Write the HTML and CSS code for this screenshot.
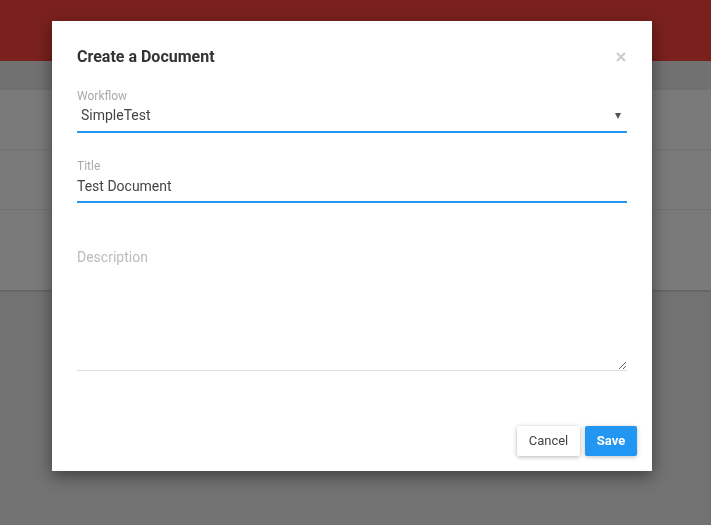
FILE: index.html
```html
<!DOCTYPE html>
<html lang="en">
<head>
<meta charset="utf-8">
<title>Create a Document</title>
<link rel="stylesheet" href="styles.css">
</head>
<body>
<div class="page">
  <header class="topbar"></header>
  <div class="toolbar"></div>
  <div class="list">
    <div class="row"></div>
    <div class="row"></div>
    <div class="row row-last"></div>
  </div>
</div>

<div class="overlay">
  <div class="modal">
    <div class="modal-body">
      <div class="modal-head">
        <h2 class="modal-title">Create a Document</h2>
        <button class="close" type="button" aria-label="Close">
          <svg width="10" height="10" viewBox="0 0 10 10"><path d="M1 1L9 9M9 1L1 9" stroke="#cccccc" stroke-width="2" stroke-linecap="butt"/></svg>
        </button>
      </div>
      <div class="field">
        <label class="field-label">Workflow</label>
        <div class="select-wrap">
          <select class="input select">
            <option>SimpleTest</option>
          </select>
          <span class="caret"></span>
        </div>
      </div>
      <div class="field field-title">
        <label class="field-label">Title</label>
        <input class="input" type="text" value="Test Document">
      </div>
      <textarea class="desc" placeholder="Description"></textarea>
    </div>
    <div class="modal-foot">
      <button class="btn btn-cancel" type="button">Cancel</button>
      <button class="btn btn-save" type="button">Save</button>
    </div>
  </div>
</div>
</body>
</html>
```
FILE: styles.css
```css
* { box-sizing: border-box; }
html, body {
  margin: 0;
  padding: 0;
  height: 100%;
}
body {
  background: #727272;
  font-family: Roboto, "Liberation Sans", Arial, sans-serif;
  overflow: hidden;
}
.page {
  display: flex;
  flex-direction: column;
}
.topbar {
  height: 61px;
  background: #7a211d;
}
.toolbar {
  height: 29px;
  background: #717171;
}
.list {
  background: #7a7a7a;
  box-shadow: 0 1px 2px rgba(0,0,0,0.2);
}
.row {
  height: 60px;
  border-bottom: 1px solid #717171;
}
.row-last {
  height: 80px;
  border-bottom: none;
}
.overlay {
  position: fixed;
  inset: 0;
  display: flex;
  align-items: flex-start;
  padding: 21px 0 0 52px;
}
.modal {
  width: 600px;
  height: 450px;
  background: #ffffff;
  box-shadow: 0 5px 15px rgba(0,0,0,0.45);
  display: flex;
  flex-direction: column;
}
.modal-body {
  padding: 26px 25px 0 25px;
}
.modal-head {
  display: flex;
  justify-content: space-between;
  align-items: center;
  height: 20px;
  margin-bottom: 22px;
}
.modal-title {
  margin: 0;
  font-size: 16px;
  font-weight: 700;
  line-height: 20px;
  color: #333333;
}
.close {
  border: 0;
  background: none;
  padding: 0;
  width: 10px;
  height: 10px;
  margin-right: 1px;
  display: flex;
}
.field {
  display: flex;
  flex-direction: column;
}
.field-title {
  margin-top: 26px;
}
.field-label {
  font-size: 12px;
  line-height: 14px;
  color: #aaaaaa;
}
.input {
  font-family: Roboto, "Liberation Sans", Arial, sans-serif;
  font-size: 14px;
  line-height: 19px;
  color: #444444;
  height: 30px;
  padding: 3px 0 6px 0;
  border: 0;
  border-bottom: 2px solid #2196f3;
  background: transparent;
  outline: none;
  width: 100%;
  border-radius: 0;
}
.select-wrap {
  position: relative;
}
.select {
  appearance: none;
  -webkit-appearance: none;
  padding-left: 4px;
}
.caret {
  position: absolute;
  right: 6px;
  top: 10px;
  width: 0;
  height: 0;
  border-left: 3.5px solid transparent;
  border-right: 3.5px solid transparent;
  border-top: 6px solid #555555;
}
.desc {
  display: block;
  margin-top: 40px;
  width: 100%;
  height: 128px;
  border: 0;
  border-bottom: 1px solid #dddddd;
  padding: 5px 0 0 0;
  font-family: Roboto, "Liberation Sans", Arial, sans-serif;
  font-size: 14px;
  line-height: 19px;
  color: #444444;
  resize: vertical;
  outline: none;
}
.desc::placeholder {
  color: #bbbbbb;
}
.modal-foot {
  margin-top: auto;
  padding: 15px;
  display: flex;
  justify-content: flex-end;
  gap: 5px;
}
.btn {
  height: 30px;
  border: 0;
  border-radius: 2px;
  font-family: Roboto, "Liberation Sans", Arial, sans-serif;
  font-size: 13px;
  line-height: 28px;
  padding: 0 11px;
  cursor: pointer;
}
.btn-cancel {
  background: #ffffff;
  color: #444444;
  box-shadow: 0 1px 4px rgba(0,0,0,0.3);
  width: 63px;
}
.btn-save {
  background: #2196f3;
  color: #ffffff;
  font-weight: 700;
  box-shadow: 0 1px 4px rgba(0,0,0,0.25);
  width: 52px;
}
```
